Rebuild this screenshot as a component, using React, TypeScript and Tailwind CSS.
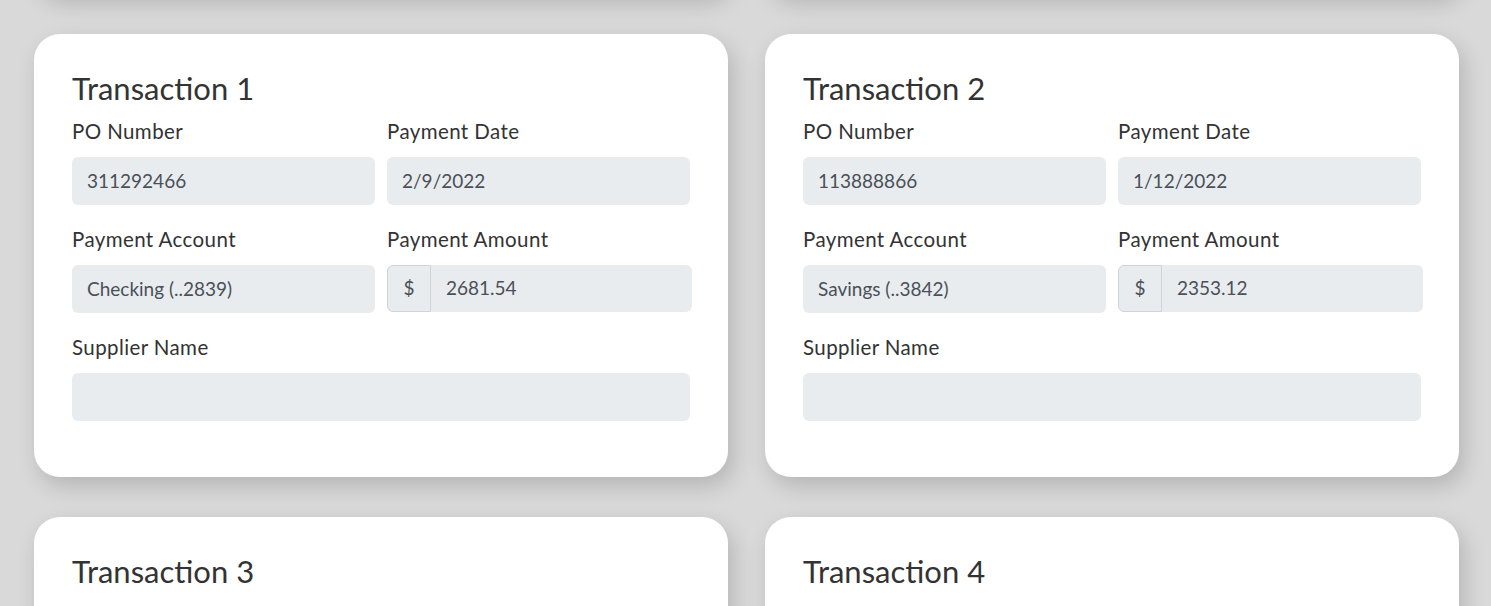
import React from "react";

type Tx = {
  title: string;
  po: string;
  date: string;
  account: string;
  amount: string;
};

const txs: Tx[] = [
  { title: "Transaction A", po: "", date: "", account: "", amount: "" },
  { title: "Transaction B", po: "", date: "", account: "", amount: "" },
  { title: "Transaction 1", po: "311292466", date: "2/9/2022", account: "Checking (..2839)", amount: "2681.54" },
  { title: "Transaction 2", po: "113888866", date: "1/12/2022", account: "Savings (..3842)", amount: "2353.12" },
  { title: "Transaction 3", po: "", date: "", account: "", amount: "" },
  { title: "Transaction 4", po: "", date: "", account: "", amount: "" },
];

function Field({ label, children }: { label: string; children: React.ReactNode }) {
  return (
    <div className="flex flex-col">
      <div className="h-[24px] leading-[24px] text-[20.5px] tracking-[0.4px] text-[#333333]">{label}</div>
      <div className="mt-[14px]">{children}</div>
    </div>
  );
}

function Box({ value }: { value: string }) {
  return (
    <div className="h-[48px] rounded-[6px] bg-[#e9ecef] pl-[15px] flex items-center text-[19px] text-[#495057]">
      {value}
    </div>
  );
}

function Card({ tx }: { tx: Tx }) {
  return (
    <div className="bg-white rounded-[26px] shadow-[5px_9px_22px_rgba(0,0,0,0.17)] pt-[36px] pb-[56px] px-[38px]">
      <div className="text-[31px] leading-[37px] text-[#333333]">{tx.title}</div>
      <div className="mt-[12px] grid grid-cols-2 gap-x-[12px] gap-y-[22px]">
        <Field label="PO Number">
          <Box value={tx.po} />
        </Field>
        <Field label="Payment Date">
          <Box value={tx.date} />
        </Field>
        <Field label="Payment Account">
          <Box value={tx.account} />
        </Field>
        <Field label="Payment Amount">
          <div className="flex h-[47px] mr-[-2px]">
            <div className="w-[44px] shrink-0 flex items-center justify-center rounded-l-[6px] border border-[#ced4da] bg-[#e9ecef] text-[19px] text-[#495057]">
              $
            </div>
            <div className="flex-1 rounded-r-[6px] bg-[#e9ecef] pl-[15px] flex items-center text-[19px] text-[#495057]">
              {tx.amount}
            </div>
          </div>
        </Field>
        <div className="col-span-2">
          <Field label="Supplier Name">
            <Box value="" />
          </Field>
        </div>
      </div>
    </div>
  );
}

export default function App() {
  return (
    <div
      className="h-[606px] overflow-hidden bg-[#d9d9d9]"
      style={{ fontFamily: "Lato, 'Open Sans', sans-serif" }}
    >
      <div className="mt-[-449px] pl-[34px] grid grid-cols-[694px_694px] gap-x-[37px] gap-y-[40px]">
        {txs.map((t) => (
          <Card key={t.title} tx={t} />
        ))}
      </div>
    </div>
  );
}
